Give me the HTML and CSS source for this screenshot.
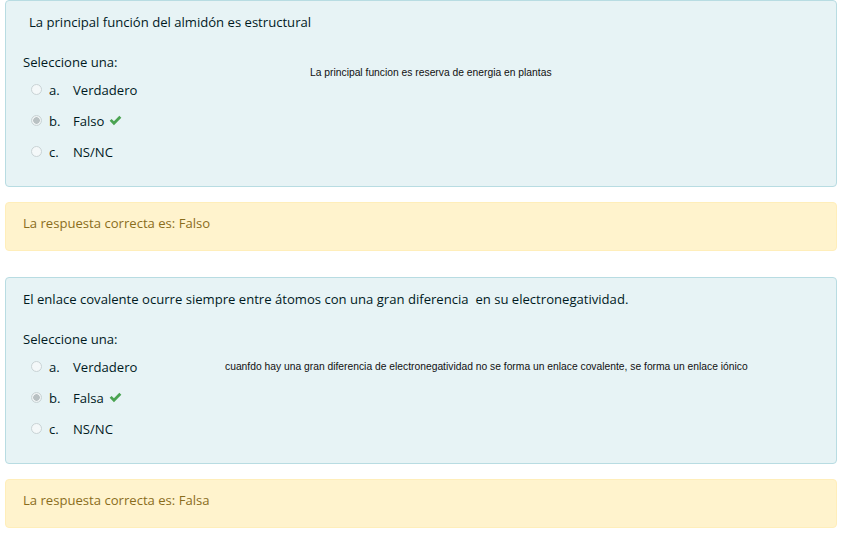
FILE: index.html
```html
<!DOCTYPE html>
<html lang="es">

<head>
    <meta charset="UTF-8">
    <title>Cuestionario</title>
    <link rel="stylesheet" href="styles.css">
</head>

<body>
    <div class="quiz">
        <div class="que">
            <div class="formulation">
                <div class="qtext indent">La principal función del almidón es estructural</div>
                <div class="prompt">Seleccione una:</div>
                <div class="answer">
                    <div class="opt"><span class="radio"></span><span class="letter">a.</span><span>Verdadero</span></div>
                    <div class="opt"><span class="radio checked"></span><span class="letter">b.</span><span>Falso</span>
                        <svg class="check" viewBox="0 0 16 16"><path d="M0.8 8.4l2.4-2.4 2.9 2.9 6.6-6.7 2.5 2.4-9.1 9.2z" fill="#4aa351"/></svg>
                    </div>
                    <div class="opt"><span class="radio"></span><span class="letter">c.</span><span>NS/NC</span></div>
                </div>
                <div class="note note-1">La principal funcion es reserva de energia en plantas</div>
            </div>
            <div class="outcome">La respuesta correcta es: Falso</div>
        </div>

        <div class="que">
            <div class="formulation">
                <div class="qtext">El enlace covalente ocurre siempre entre átomos con una gran diferencia&nbsp; en su electronegatividad.</div>
                <div class="prompt">Seleccione una:</div>
                <div class="answer">
                    <div class="opt"><span class="radio"></span><span class="letter">a.</span><span>Verdadero</span></div>
                    <div class="opt"><span class="radio checked"></span><span class="letter">b.</span><span>Falsa</span>
                        <svg class="check" viewBox="0 0 16 16"><path d="M0.8 8.4l2.4-2.4 2.9 2.9 6.6-6.7 2.5 2.4-9.1 9.2z" fill="#4aa351"/></svg>
                    </div>
                    <div class="opt"><span class="radio"></span><span class="letter">c.</span><span>NS/NC</span></div>
                </div>
                <div class="note note-2">cuanfdo hay una gran diferencia de electronegatividad no se forma un enlace covalente, se forma un enlace iónico</div>
            </div>
            <div class="outcome">La respuesta correcta es: Falsa</div>
        </div>
    </div>
</body>

</html>
```

FILE: styles.css
```css
body {
    margin: 0;
    background: #fff;
    font-family: 'Open Sans', 'Noto Sans', sans-serif;
    font-size: 13.1px;
    color: #1d2125;
}

.quiz {
    width: 832px;
    margin: 0 5px;
}

.que {
    margin-bottom: 26px;
}

.formulation {
    position: relative;
    box-sizing: border-box;
    height: 187px;
    padding: 10px 17px 0 17px;
    background-color: #e7f3f5;
    border: 1px solid #b8dce2;
    border-radius: 4px;
    color: #001a1e;
}

.qtext {
    line-height: 22px;
}

.qtext.indent {
    padding-left: 6px;
}

.prompt {
    margin-top: 18px;
    line-height: 22px;
}

.answer {
    margin-top: 1px;
}

.opt {
    display: flex;
    align-items: center;
    height: 31px;
    padding-left: 8px;
}

.radio {
    width: 9px;
    height: 9px;
    border: 1px solid #c9d3d5;
    border-radius: 50%;
    background: #f4f8f9;
    margin-right: 7px;
}

.radio.checked {
    background: radial-gradient(circle, #b9c1c3 0 3px, #eef2f3 3.5px);
}

.letter {
    width: 24px;
}

.check {
    width: 13px;
    height: 13px;
    margin-left: 5px;
}

.note {
    position: absolute;
    font-family: 'Liberation Sans', Arial, sans-serif;
    font-size: 10.3px;
    color: #111;
}

.note-1 {
    left: 304px;
    top: 66px;
}

.note-2 {
    left: 219px;
    top: 83px;
}

.outcome {
    margin-top: 15px;
    padding: 9px 17px 15px 17px;
    line-height: 23px;
    background-color: #fff3cd;
    border: 1px solid #ffeeba;
    border-radius: 4px;
    color: #8a6d1c;
}
```
